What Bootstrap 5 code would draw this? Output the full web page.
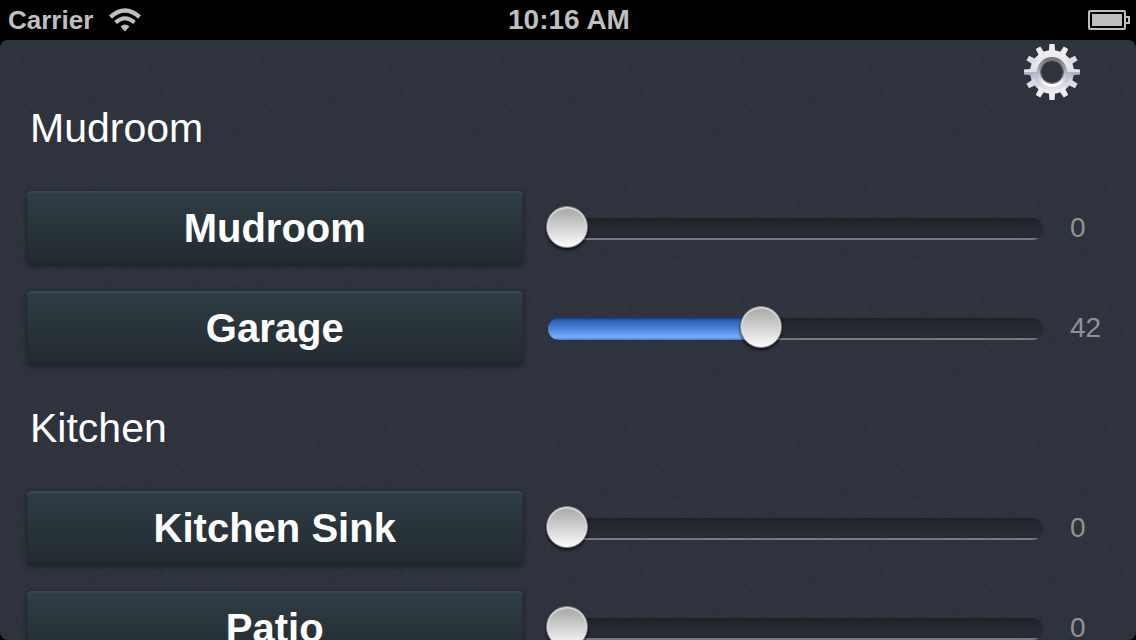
<!DOCTYPE html>
<html lang="en">
<head>
<meta charset="utf-8">
<meta name="viewport" content="width=device-width, initial-scale=1">
<title>Lights</title>
<link href="https://cdn.jsdelivr.net/npm/bootstrap@5.3.0/dist/css/bootstrap.min.css" rel="stylesheet">
<style>
  body { background: #000; color: #fff; font-family: "Liberation Sans", Helvetica, Arial, sans-serif; }
  .status-bar { display: grid; grid-template-columns: 1fr auto 1fr; height: 40px; padding: 0 6px 0 8px; color: #bfbfbf; font-weight: 700; font-size: 26px; line-height: 40px; }
  .status-time { font-size: 28px; }
  .panel {
    border-radius: 8px; scrollbar-width: none; background-color: #2c303a;
    background-image: url("data:image/svg+xml,%3Csvg xmlns='http://www.w3.org/2000/svg' width='240' height='240'%3E%3Cfilter id='n'%3E%3CfeTurbulence type='fractalNoise' baseFrequency='.25' numOctaves='3' stitchTiles='stitch'/%3E%3CfeColorMatrix type='saturate' values='0'/%3E%3C/filter%3E%3Crect width='240' height='240' filter='url(%23n)' opacity='.04'/%3E%3C/svg%3E");
  }
  .panel::-webkit-scrollbar { display: none; }
  .gear-btn { line-height: 0; margin-right: 56px; }
  .room + .room { padding-top: 22px; }
  .room-name { font-size: 41px; line-height: 56px; padding-left: 30px; margin-bottom: 22px; font-weight: 400; }
  .light-row { height: 100px; padding-left: 27px; }
  .light-row > .light-btn, .light-row > .level { flex: 1 1 0; min-width: 0; }
  .light-btn, .light-btn:hover, .light-btn:active {
    height: 74px; border: 0; border-radius: 5px; color: #fff !important; font-size: 40px; font-weight: 700; line-height: 48px;
    background: linear-gradient(#303d45, #29343a 50%, #222a32);
    box-shadow: inset 0 2px 1px #394951, inset 0 -2px 2px #1e262e, 0 1px 4px 1px rgba(24,28,36,.7);
  }
  .level { -webkit-appearance: none; appearance: none; height: 44px; margin: 2px 27px 0 25px; background: transparent; }
  .level::-webkit-slider-runnable-track {
    height: 22px; border-radius: 11px;
    background:
      linear-gradient(#0a3f9f, #2d62b8 3px, #4c84d6 11px, #70a9f8 18px, #70a9f8 20px, #3974c5) 0 0 / var(--fill) 100% no-repeat,
      linear-gradient(#1e2024, #25282f 8px, #282c34 19px, #25272c 20px, #777980 20px);
  }
  .level::-webkit-slider-thumb {
    -webkit-appearance: none; width: 42px; height: 42px; margin-top: -12px; margin-left: -2px; border-radius: 50%; border: 1px solid #85868a;
    background: linear-gradient(#a5a5a5, #fcfcfc);
    box-shadow: inset 0 1px 2px #fff, 0 2px 3px rgba(0,0,0,.7);
  }
  .level-value { width: 66px; font-size: 28px; line-height: 32px; color: #929292; }
</style>
</head>
<body class="d-flex flex-column vh-100 overflow-hidden">
<header class="status-bar flex-shrink-0">
  <div class="d-flex align-items-center gap-3">
    <span>Carrier</span>
    <svg width="32" height="24" viewBox="0 0 32 24" aria-label="Wi-Fi" role="img">
      <path d="M1.500 9Q16-4 30.500 9" fill="none" stroke="currentColor" stroke-width="4.500"/>
      <path d="M6.500 14.500Q16 6 25.500 14.500" fill="none" stroke="currentColor" stroke-width="4"/>
      <path d="M11.500 18.500Q16 14.500 20.500 18.500L16 23.500z" fill="currentColor"/>
    </svg>
  </div>
  <time class="status-time">10:16 AM</time>
  <div class="d-flex align-items-center justify-content-end">
    <svg width="42" height="20" viewBox="0 0 42 20" aria-label="Battery full" role="img">
      <rect x="1" y="1" width="36" height="18" rx="1" fill="none" stroke="currentColor" stroke-width="2"/>
      <rect x="4" y="4" width="30" height="12" fill="currentColor"/>
      <path d="M38 7h3v6h-3" fill="none" stroke="currentColor" stroke-width="2"/>
    </svg>
  </div>
</header>
<main class="panel flex-grow-1 overflow-auto">
  <div class="d-flex justify-content-end pt-1">
    <button type="button" class="btn p-0 border-0 gear-btn" aria-label="Settings">
      <svg width="56" height="56" viewBox="-28 -28 56 56">
        <defs>
          <linearGradient id="metal" gradientUnits="userSpaceOnUse" x1="0" y1="-28" x2="0" y2="28">
            <stop offset="0" stop-color="#f6f6f6"/><stop offset=".49" stop-color="#dedee6"/>
            <stop offset=".5" stop-color="#b1b1c9"/><stop offset=".8" stop-color="#e3e3ec"/><stop offset="1" stop-color="#fff"/>
          </linearGradient>
          <linearGradient id="bevel" x1="0" y1="0" x2="0" y2="1">
            <stop offset="0" stop-color="#77777c"/><stop offset=".55" stop-color="#b5b5bd"/><stop offset="1" stop-color="#fff"/>
          </linearGradient>
          <path id="teeth" d="M-2.600-28H2.600L3.200-19H-3.200zM-2.600 28H2.600L3.200 19H-3.200z"/>
        </defs>
        <path fill="url(#metal)" fill-rule="evenodd" d="M0-22A22 22 0 1 1 0 22A22 22 0 1 1 0-22zM0-12A12 12 0 1 0 0 12A12 12 0 1 0 0-12z"/>
        <g fill="#ececf1">
          <use href="#teeth"/><use href="#teeth" transform="rotate(30)"/><use href="#teeth" transform="rotate(150)"/>
        </g>
        <g fill="#dcdce6">
          <use href="#teeth" transform="rotate(60)"/><use href="#teeth" transform="rotate(120)"/>
        </g>
        <path d="M-28-2.600L-19-3.200V0H-28zM28-2.600L19-3.200V0H28z" fill="#e2e2e9"/>
        <path d="M-28 2.600L-19 3.200V0H-28zM28 2.600L19 3.200V0H28z" fill="#b1b1c9"/>
        <circle r="13" fill="none" stroke="url(#bevel)" stroke-width="4"/>
        <circle r="11.500" fill="none" stroke="#66666c" stroke-width="1"/>
      </svg>
    </button>
  </div>

  <section class="room">
    <h2 class="room-name">Mudroom</h2>
    <div class="light-row d-flex align-items-center">
      <button type="button" class="btn light-btn px-0">Mudroom</button>
      <input type="range" class="level" min="0" max="100" step="any" value="0" aria-label="Mudroom level" style="--fill: 0%">
      <output class="level-value">0</output>
    </div>
    <div class="light-row d-flex align-items-center">
      <button type="button" class="btn light-btn px-0">Garage</button>
      <input type="range" class="level" min="0" max="100" step="any" value="42.8" aria-label="Garage level" style="--fill: 42.8%">
      <output class="level-value">42</output>
    </div>
  </section>

  <section class="room">
    <h2 class="room-name">Kitchen</h2>
    <div class="light-row d-flex align-items-center">
      <button type="button" class="btn light-btn px-0">Kitchen Sink</button>
      <input type="range" class="level" min="0" max="100" step="any" value="0" aria-label="Kitchen Sink level" style="--fill: 0%">
      <output class="level-value">0</output>
    </div>
    <div class="light-row d-flex align-items-center">
      <button type="button" class="btn light-btn px-0">Patio</button>
      <input type="range" class="level" min="0" max="100" step="any" value="0" aria-label="Patio level" style="--fill: 0%">
      <output class="level-value">0</output>
    </div>
  </section>
</main>
<script src="https://cdn.jsdelivr.net/npm/bootstrap@5.3.0/dist/js/bootstrap.bundle.min.js"></script>
<script>
  document.querySelectorAll('.level').forEach(function (slider) {
    slider.addEventListener('input', function () {
      slider.style.setProperty('--fill', slider.value + '%');
      slider.nextElementSibling.value = Math.floor(slider.value);
    });
  });
</script>
</body>
</html>
